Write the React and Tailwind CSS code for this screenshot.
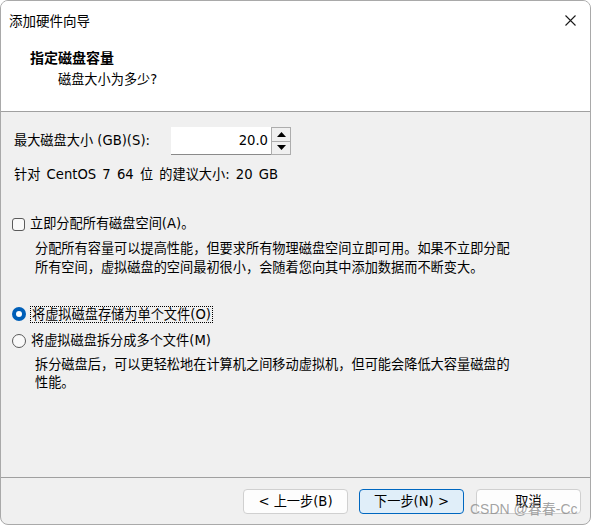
import React from "react";

function Checkbox() {
  return <div className="w-[13px] h-[13px] rounded-[3px] border border-[#5a5a5a] bg-[#f9f9f9] shrink-0" />;
}

function Radio({ checked }) {
  if (checked) {
    return (
      <div className="w-[14px] h-[14px] rounded-full bg-[#005fb8] flex items-center justify-center shrink-0">
        <div className="w-[6px] h-[6px] rounded-full bg-white" />
      </div>
    );
  }
  return <div className="w-[14px] h-[14px] rounded-full border border-[#5a5a5a] bg-[#f9f9f9] shrink-0" />;
}

function Spinner() {
  return (
    <div className="w-[20px] h-[28px] flex flex-col border border-[#adadad] bg-[#f0f0f0]">
      <div className="flex-1 flex items-center justify-center border-b border-[#adadad]">
        <svg width="9" height="5" viewBox="0 0 9 5"><path d="M0 5 L4.5 0 L9 5 Z" fill="#000" /></svg>
      </div>
      <div className="flex-1 flex items-center justify-center">
        <svg width="9" height="5" viewBox="0 0 9 5"><path d="M0 0 L4.5 5 L9 0 Z" fill="#000" /></svg>
      </div>
    </div>
  );
}

export default function App() {
  return (
    <div className="w-[591px] h-[525px] relative overflow-hidden rounded-[8px] border border-[#a9a9a9] bg-[#f0f0f0] flex flex-col text-[13.2px] text-black font-['DejaVu_Sans','Noto_Sans_CJK_SC',sans-serif]">
      {/* title bar */}
      <div className="h-[39px] bg-white flex items-center justify-between pl-[8px] pr-[14px] shrink-0">
        <span className="text-[13.5px] font-['Noto_Sans_CJK_SC',sans-serif]">添加硬件向导</span>
        <svg width="11" height="11" viewBox="0 0 11 11">
          <path d="M0.5 0.5 L10.5 10.5 M10.5 0.5 L0.5 10.5" stroke="#1a1a1a" strokeWidth="1.1" />
        </svg>
      </div>
      {/* header */}
      <div className="h-[72px] bg-white border-b border-[#a0a0a0] pt-[9px] shrink-0">
        <div className="h-[18px] leading-[18px] pl-[29px] font-bold text-[14px]">指定磁盘容量</div>
        <div className="h-[18px] leading-[18px] pl-[57px] mt-[4px]">磁盘大小为多少?</div>
      </div>
      {/* body */}
      <div className="flex flex-col">
        <div className="mt-[15px] h-[28px] flex items-center pl-[13px]">
          <span className="w-[157px] shrink-0">最大磁盘大小 (GB)(S):</span>
          <div className="w-[100px] h-[28px] bg-white border-b border-[#8a8a8a] flex items-center justify-end pr-[3px]">20.0</div>
          <Spinner />
        </div>
        <div className="mt-[11px] h-[18px] leading-[18px] pl-[13px] [word-spacing:2px]">针对 CentOS 7 64 位 的建议大小: 20 GB</div>

        <div className="mt-[31px] h-[18px] flex items-center pl-[11px] gap-[5px]">
          <Checkbox />
          <span className="leading-[18px]">立即分配所有磁盘空间(A)。</span>
        </div>
        <div className="mt-[6px] pl-[34px] leading-[19px]">
          <div>分配所有容量可以提高性能，但要求所有物理磁盘空间立即可用。如果不立即分配</div>
          <div>所有空间，虚拟磁盘的空间最初很小，会随着您向其中添加数据而不断变大。</div>
        </div>

        <div className="mt-[28px] h-[18px] flex items-center pl-[11px] gap-[4px]">
          <Radio checked />
          <span className="leading-[15px] border border-dotted border-black px-[1px]">将虚拟磁盘存储为单个文件(O)</span>
        </div>
        <div className="mt-[9px] h-[18px] flex items-center pl-[11px] gap-[5px]">
          <Radio />
          <span className="leading-[18px]">将虚拟磁盘拆分成多个文件(M)</span>
        </div>
        <div className="mt-[6px] pl-[34px] leading-[18px]">
          <div>拆分磁盘后，可以更轻松地在计算机之间移动虚拟机，但可能会降低大容量磁盘的</div>
          <div>性能。</div>
        </div>
      </div>
      {/* footer */}
      <div className="mt-auto h-[47px] border-t border-[#a0a0a0] flex justify-end items-start pt-[11px] pr-[9px] shrink-0">
        <button className="w-[105px] h-[25px] rounded-[4px] border border-[#d0d0d0] bg-[#fdfdfd] flex items-center justify-center">&lt; 上一步(B)</button>
        <button className="ml-[11px] w-[105px] h-[25px] rounded-[4px] border border-[#0067c0] bg-[#e0eef9] flex items-center justify-center">下一步(N) &gt;</button>
        <button className="ml-[12px] w-[105px] h-[25px] rounded-[4px] border border-[#d0d0d0] bg-[#fdfdfd] flex items-center justify-center">取消</button>
      </div>
      <div className="absolute left-[469px] top-[499px] text-[14px] leading-[18px] text-[#8c8c8c]/80 font-['Liberation_Sans','Noto_Sans_CJK_SC',sans-serif]">CSDN @春春-Cc</div>
    </div>
  );
}
